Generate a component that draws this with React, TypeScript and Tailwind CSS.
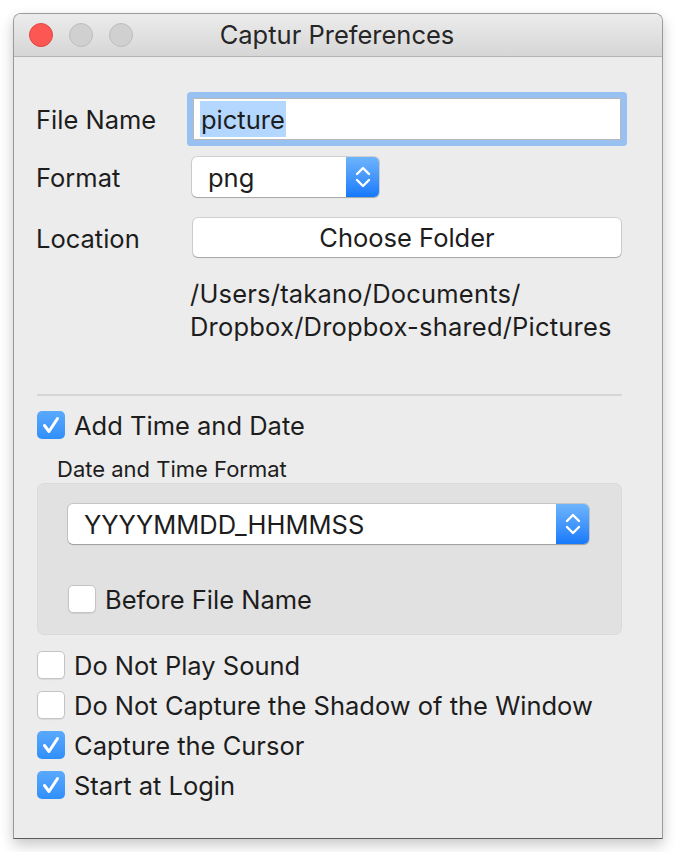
import React from "react";

// ─── Pequeños controles estilo macOS ──────────────────────────────────────────
function Check({ on }: { on: boolean }) {
  if (on) {
    return (
      <div className="w-[28px] h-[28px] rounded-[5px] bg-gradient-to-b from-[#5aa9fc] to-[#2f8ffb] flex items-center justify-center shrink-0">
        <svg width="28" height="28" viewBox="0 0 28 28" fill="none">
          <path d="M7.5 14.5 L12 20.5 L20.5 7.5" stroke="white" strokeWidth="3" strokeLinecap="round" strokeLinejoin="round" />
        </svg>
      </div>
    );
  }
  return (
    <div className="w-[28px] h-[28px] rounded-[5px] bg-white border border-[#c4c4c4] shadow-[0_1px_1px_rgba(0,0,0,0.08)] shrink-0" />
  );
}

function Stepper() {
  return (
    <div className="w-[33px] h-full rounded-r-[5px] bg-gradient-to-b from-[#6db4fb] to-[#1479fb] flex items-center justify-center">
      <svg width="18" height="28" viewBox="0 0 18 28" fill="none">
        <path d="M3 11 L9 5 L15 11" stroke="white" strokeWidth="2.4" strokeLinecap="round" strokeLinejoin="round" />
        <path d="M3 17 L9 23 L15 17" stroke="white" strokeWidth="2.4" strokeLinecap="round" strokeLinejoin="round" />
      </svg>
    </div>
  );
}

function Popup({ value, className }: { value: string; className: string }) {
  return (
    <div className={`h-[40px] flex items-stretch rounded-[5px] bg-white shadow-[0_0_0_1px_rgba(0,0,0,0.12),0_1px_1px_rgba(0,0,0,0.2)] ${className}`}>
      <div className="flex-1 flex items-center pl-[16px] pt-[2px]">{value}</div>
      <Stepper />
    </div>
  );
}

function CheckRow({ on, label, className = "" }: { on: boolean; label: string; className?: string }) {
  return (
    <div className={`flex items-center gap-[9px] h-[28px] ${className}`}>
      <Check on={on} />
      <span className="pt-[3px]">{label}</span>
    </div>
  );
}

// ─── Ventana ──────────────────────────────────────────────────────────────────
export default function App() {
  return (
    <div className="w-[676px] h-[852px] bg-white pt-[13px] pl-[13px]" style={{ fontFamily: "Inter, 'Noto Sans', sans-serif" }}>
      <div className="w-[650px] h-[826px] flex flex-col rounded-t-[8px] border border-[#9a9a9a] border-b-[#5a5a5a] shadow-[0_6px_14px_rgba(0,0,0,0.22)] overflow-hidden text-[25.5px] text-[#1d1d1d]">
        {/* Barra de título */}
        <div className="h-[43px] shrink-0 flex items-center relative bg-gradient-to-b from-[#ececec] to-[#d6d6d6] border-b border-[#b4b4b4]">
          <div className="absolute left-[15px] top-[9px] flex gap-[16px]">
            <div className="w-[24px] h-[24px] rounded-full bg-[#fc5753] border border-[#df4744]" />
            <div className="w-[24px] h-[24px] rounded-full bg-[#d0d0d0] border border-[#bdbdbd]" />
            <div className="w-[24px] h-[24px] rounded-full bg-[#d0d0d0] border border-[#bdbdbd]" />
          </div>
          <div className="flex-1 text-center text-[25.5px] text-[#262626] pt-[1px] pr-[2px]">Captur Preferences</div>
        </div>

        {/* Contenido */}
        <div className="flex-1 bg-[#ececec] pl-[22px] pr-[40px] pt-[41px]">
          <div className="flex items-center h-[42px]">
            <div className="w-[157px] pt-[3px]">File Name</div>
            <div className="flex-1 h-[42px] bg-white border border-[#b8b8b8] rounded-[1px] shadow-[0_0_0_6px_#98c1f1] mr-[1px] flex items-center pl-[6px]">
              <span className="bg-[#b3d7ff] leading-[34px] px-[1px] pt-[2px]">picture</span>
            </div>
          </div>

          <div className="flex items-center h-[40px] mt-[17px]">
            <div className="w-[156px] pt-[3px]">Format</div>
            <Popup value="png" className="w-[187px]" />
          </div>

          <div className="flex items-center h-[39px] mt-[21px]">
            <div className="w-[157px] pt-[3px]">Location</div>
            <div className="flex-1 h-[39px] rounded-[5px] bg-white shadow-[0_0_0_1px_rgba(0,0,0,0.12),0_1px_1px_rgba(0,0,0,0.2)] flex items-center justify-center mr-[1px] pt-[2px]">
              Choose Folder
            </div>
          </div>

          <div className="mt-[20px] pl-[154px] leading-[33px] tracking-[0.2px]">
            <div>/Users/takano/Documents/</div>
            <div>Dropbox/Dropbox-shared/Pictures</div>
          </div>

          <div className="mt-[51px] h-[2px] bg-[#d6d6d6] ml-[1px]" />

          <CheckRow on label="Add Time and Date" className="mt-[15px] ml-[1px]" />

          <div className="mt-[16px] pl-[21px] text-[22px] leading-[24px] pt-[2px]">Date and Time Format</div>

          <div className="mt-[2px] ml-[1px] h-[152px] rounded-[7px] bg-[#e1e1e1] border border-[#dadada] pl-[30px] pr-[32px] pt-[20px]">
            <Popup value="YYYYMMDD_HHMMSS" className="w-full" />
            <CheckRow on={false} label="Before File Name" className="mt-[41px]" />
          </div>

          <div className="mt-[16px] ml-[1px] flex flex-col gap-[12px]">
            <CheckRow on={false} label="Do Not Play Sound" />
            <CheckRow on={false} label="Do Not Capture the Shadow of the Window" />
            <CheckRow on label="Capture the Cursor" />
            <CheckRow on label="Start at Login" />
          </div>
        </div>
      </div>
    </div>
  );
}
